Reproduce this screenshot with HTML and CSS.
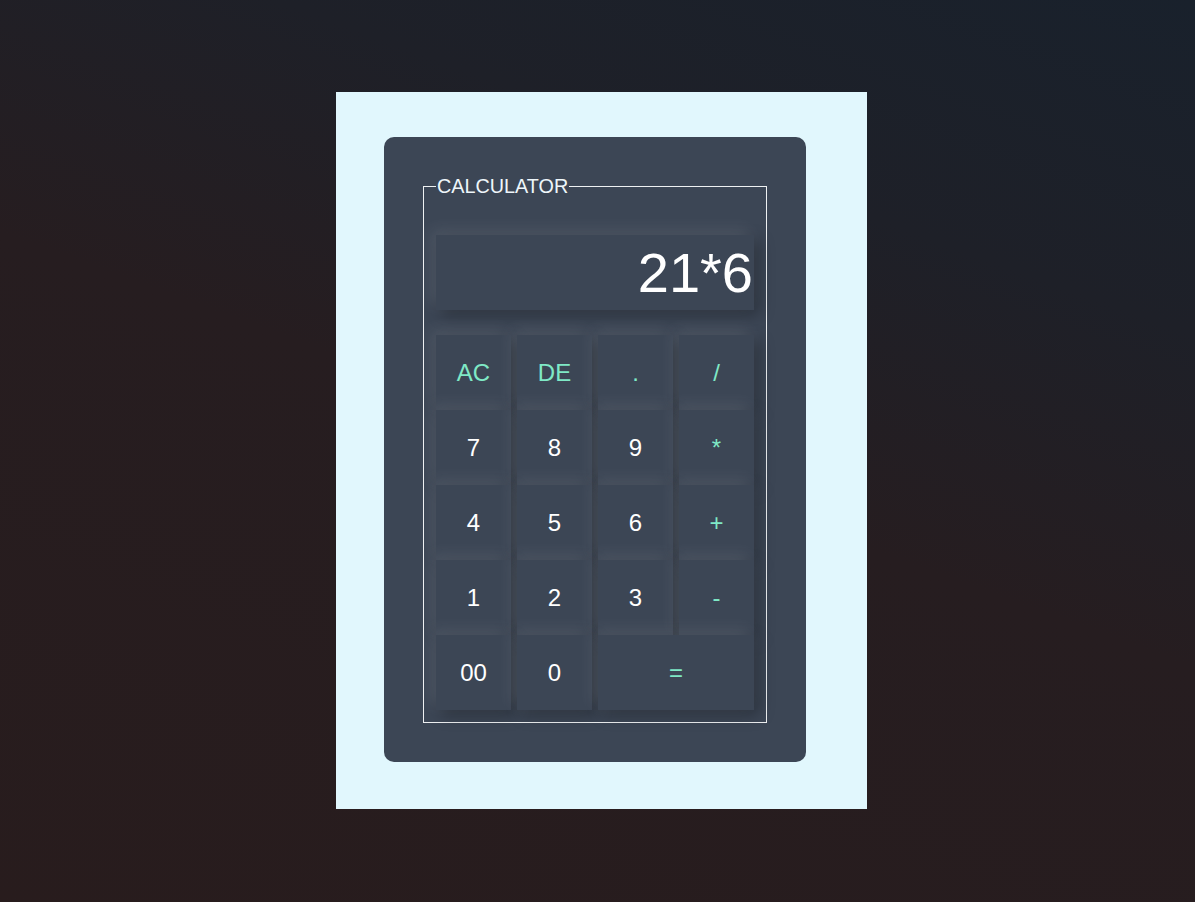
FILE: index.html
```html
<!DOCTYPE html>
<html>
<head>
<meta charset="utf-8">
<link rel="stylesheet" href="styles.css">
</head>
<body>
<div class="page">
  <div class="panel">
    <div class="card">
      <fieldset class="frame">
        <legend class="title">CALCULATOR</legend>
        <div class="display">21*6</div>
        <div class="keys">
          <button class="key op">AC</button>
          <button class="key op">DE</button>
          <button class="key op">.</button>
          <button class="key op">/</button>
          <button class="key">7</button>
          <button class="key">8</button>
          <button class="key">9</button>
          <button class="key op">*</button>
          <button class="key">4</button>
          <button class="key">5</button>
          <button class="key">6</button>
          <button class="key op">+</button>
          <button class="key">1</button>
          <button class="key">2</button>
          <button class="key">3</button>
          <button class="key op">-</button>
          <button class="key">00</button>
          <button class="key">0</button>
          <button class="key op wide">=</button>
        </div>
      </fieldset>
    </div>
  </div>
</div>
</body>
</html>
```

FILE: styles.css
```css
html, body {
  margin: 0;
  padding: 0;
  height: 100%;
}
body {
  background: linear-gradient(200deg, #19212c 0%, #1e2028 25%, #261d20 50%, #281c1d 100%);
  font-family: "Liberation Sans", Arial, sans-serif;
}
.page {
  height: 902px;
  display: flex;
  align-items: flex-start;
  padding-left: 336px;
  padding-top: 92px;
  box-sizing: border-box;
}
.panel {
  background: #e1f7fd;
  width: 531px;
  height: 717px;
  box-sizing: border-box;
  padding: 45px 0 0 48px;
}
.card {
  width: 422px;
  height: 625px;
  box-sizing: border-box;
  background: #3c4655;
  border-radius: 10px;
  padding: 38px 39px 0 39px;
}
.frame {
  margin: 0;
  border: 1px solid #eef0f2;
  padding: 0 12px 12px 12px;
  font-size: 16px;
}
.title {
  color: #eef6fa;
  font-size: 19.8px;
  padding: 0 1px;
  line-height: 23px;
}
.display {
  margin-top: 37px;
  height: 75px;
  background: #3c4655;
  color: #ffffff;
  font-size: 56px;
  text-align: right;
  line-height: 75px;
  padding-right: 1px;
  box-shadow: -5px -5px 15px rgba(255,255,255,0.1), 5px 5px 15px rgba(0,0,0,0.3);
}
.keys {
  margin-top: 25px;
  display: grid;
  grid-template-columns: repeat(4, 75px);
  grid-auto-rows: 75px;
  justify-content: space-between;
}
.key {
  border: none;
  margin: 0;
  padding: 0;
  background: #3c4655;
  color: #ffffff;
  font-family: "Liberation Sans", Arial, sans-serif;
  font-size: 24px;
  box-shadow: -5px -5px 15px rgba(255,255,255,0.1), 5px 5px 15px rgba(0,0,0,0.3);
}
.op {
  color: #7fe9c6;
}
.wide {
  grid-column: span 2;
}
```
